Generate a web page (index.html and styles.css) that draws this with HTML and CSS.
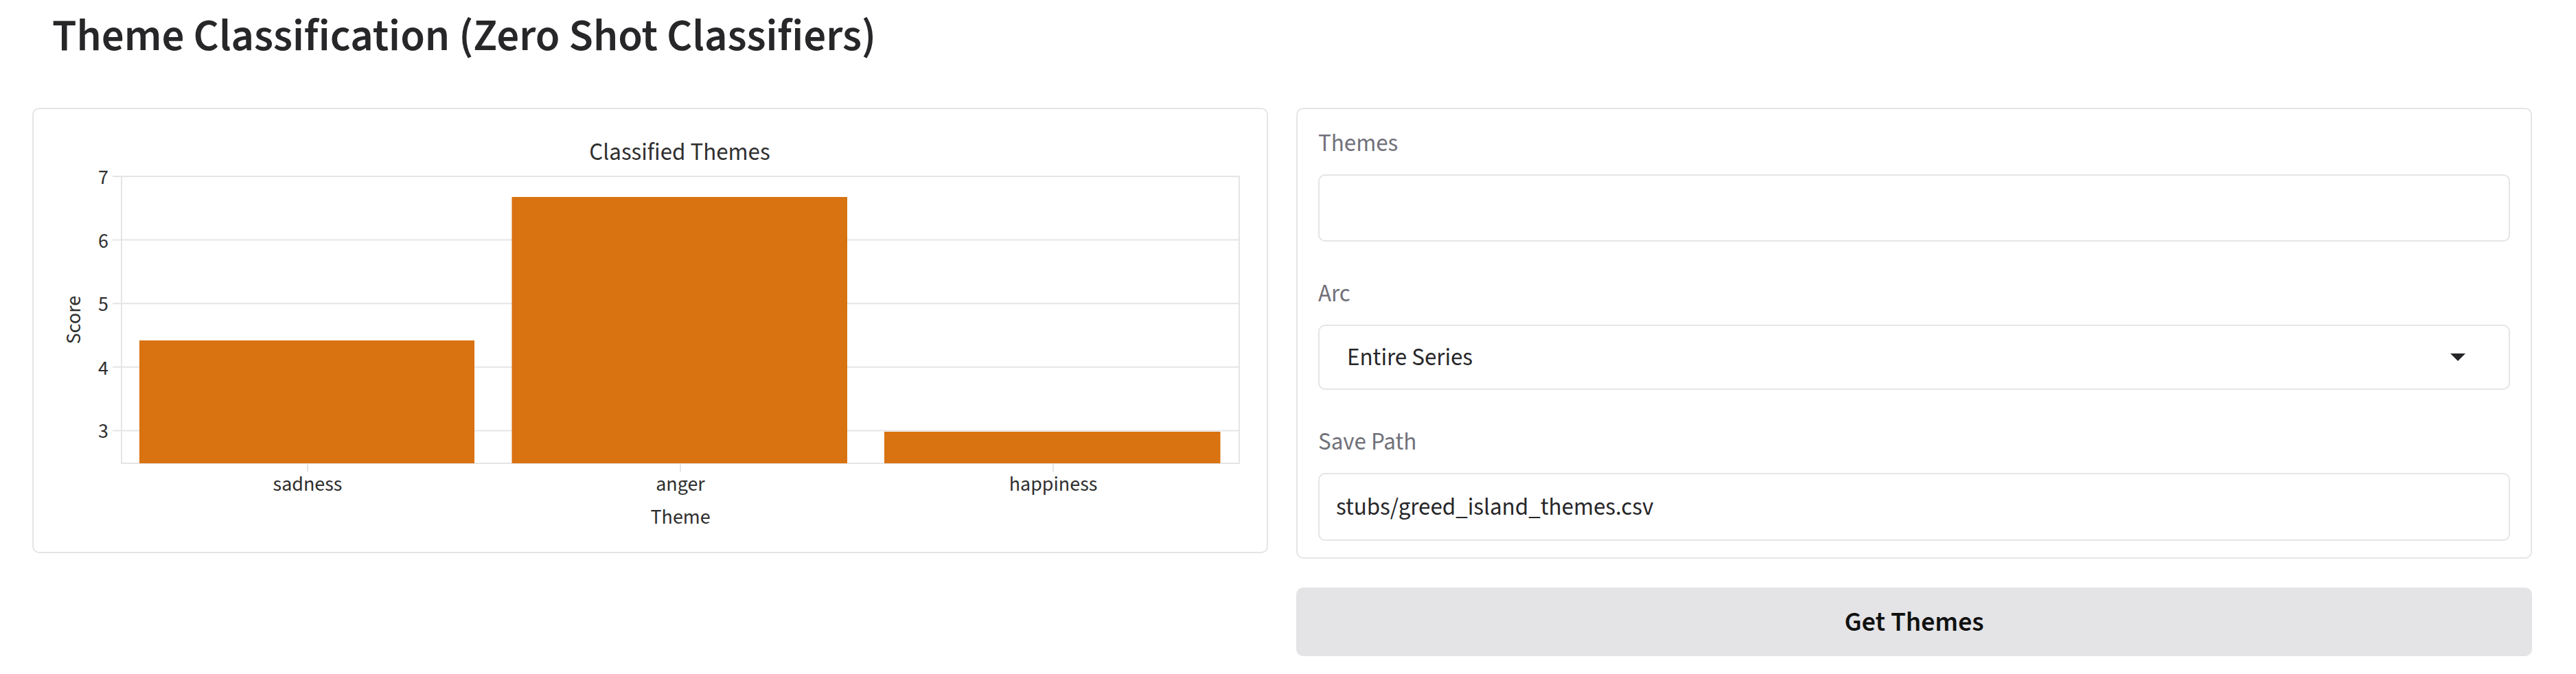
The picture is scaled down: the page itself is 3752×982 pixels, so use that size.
FILE: index.html
```html
<!DOCTYPE html>
<html lang="en">
<head>
<meta charset="utf-8">
<title>Theme Classification</title>
<link rel="stylesheet" href="styles.css">
</head>
<body>
<main class="page">
  <h2 class="title">Theme Classification (Zero Shot Classifiers)</h2>
  <div class="row">
    <div class="col">
      <div class="card chart-card">
        <svg class="chart" width="1796" height="645" viewBox="0 0 1796 645">
          <g class="grid">
            <line x1="128" y1="190.6" x2="1756" y2="190.6"/>
            <line x1="128" y1="283.2" x2="1756" y2="283.2"/>
            <line x1="128" y1="375.8" x2="1756" y2="375.8"/>
            <line x1="128" y1="468.4" x2="1756" y2="468.4"/>
            <rect x="128" y="98" width="1628" height="418" fill="none"/>
            <line x1="115" y1="98" x2="128" y2="98"/>
            <line x1="115" y1="190.6" x2="128" y2="190.6"/>
            <line x1="115" y1="283.2" x2="128" y2="283.2"/>
            <line x1="115" y1="375.8" x2="128" y2="375.8"/>
            <line x1="115" y1="468.4" x2="128" y2="468.4"/>
            <line x1="399" y1="516" x2="399" y2="528"/>
            <line x1="942" y1="516" x2="942" y2="528"/>
            <line x1="1485" y1="516" x2="1485" y2="528"/>
          </g>
          <g class="bars">
            <rect x="154" y="337" width="488" height="179"/>
            <rect x="696.5" y="128" width="488.5" height="388"/>
            <rect x="1239" y="470" width="489.5" height="46"/>
          </g>
          <text class="chart-title" x="941" y="74">Classified Themes</text>
          <g class="yticks">
            <text x="109" y="109">7</text>
            <text x="109" y="201.6">6</text>
            <text x="109" y="294.2">5</text>
            <text x="109" y="386.8">4</text>
            <text x="109" y="479.4">3</text>
          </g>
          <g class="xticks">
            <text x="399" y="556">sadness</text>
            <text x="942" y="556">anger</text>
            <text x="1485" y="556">happiness</text>
          </g>
          <text class="axis-title" x="942" y="604">Theme</text>
          <text class="axis-title" transform="translate(68 307) rotate(-90)">Score</text>
        </svg>
      </div>
    </div>
    <div class="col">
      <div class="card form-card">
        <div class="field">
          <span class="label">Themes</span>
          <div class="input"></div>
        </div>
        <div class="field">
          <span class="label">Arc</span>
          <div class="input select">
            <span>Entire Series</span>
            <svg class="caret" width="22" height="11" viewBox="0 0 22 11"><path d="M0 0H22L11 11Z"/></svg>
          </div>
        </div>
        <div class="field">
          <span class="label">Save Path</span>
          <div class="input tall">stubs/greed_island_themes.csv</div>
        </div>
      </div>
      <button class="btn">Get Themes</button>
    </div>
  </div>
</main>
</body>
</html>
```

FILE: styles.css
```css
* { box-sizing: border-box; }
body {
  margin: 0;
  background: #ffffff;
  font-family: "Source Sans 3", Lato, "Noto Sans", sans-serif;
  color: #27272a;
}
.page { padding: 13px 64px 0 47px; }
.title {
  margin: 0 0 64px 29px;
  font-size: 65px;
  line-height: 80px;
  font-weight: 600;
  color: #27272a;
}
.row {
  display: grid;
  grid-template-columns: 1800px 1800px;
  column-gap: 41px;
  align-items: start;
}
.col { display: flex; flex-direction: column; }
.card {
  border: 2px solid #e5e5e5;
  border-radius: 10px;
  background: #ffffff;
}
.chart { display: block; }
.grid line, .grid rect { stroke: #e5e5e5; stroke-width: 2; }
.bars rect { fill: #d97210; }
.chart text { fill: #2f2f2f; font-family: "Source Sans 3", Lato, sans-serif; }
.chart-title { font-size: 35px; text-anchor: middle; }
.yticks text { font-size: 30px; text-anchor: end; }
.xticks text { font-size: 30px; text-anchor: middle; }
.axis-title { font-size: 30px; text-anchor: middle; }
.form-card { padding: 31px 30px 24px; }
.field { display: flex; flex-direction: column; gap: 26px; }
.field + .field { margin-top: 57px; }
.label { font-size: 35px; line-height: 38px; color: #71717a; }
.input {
  height: 98px;
  border: 2px solid #e5e5e5;
  border-radius: 10px;
  display: flex;
  align-items: center;
  padding: 0 24px;
  font-size: 35px;
  color: #27272a;
}
.input.tall { height: 99px; }
.select { height: 95px; padding: 0 40px; justify-content: space-between; }
.caret { margin-right: 23px; fill: #27272a; }
.btn {
  display: block;
  width: 100%;
  height: 100px;
  margin-top: 42px;
  border: 0;
  border-radius: 10px;
  background: #e4e4e7;
  font-family: "Source Sans 3", Lato, sans-serif;
  font-size: 40px;
  font-weight: 600;
  color: #111111;
}
```
